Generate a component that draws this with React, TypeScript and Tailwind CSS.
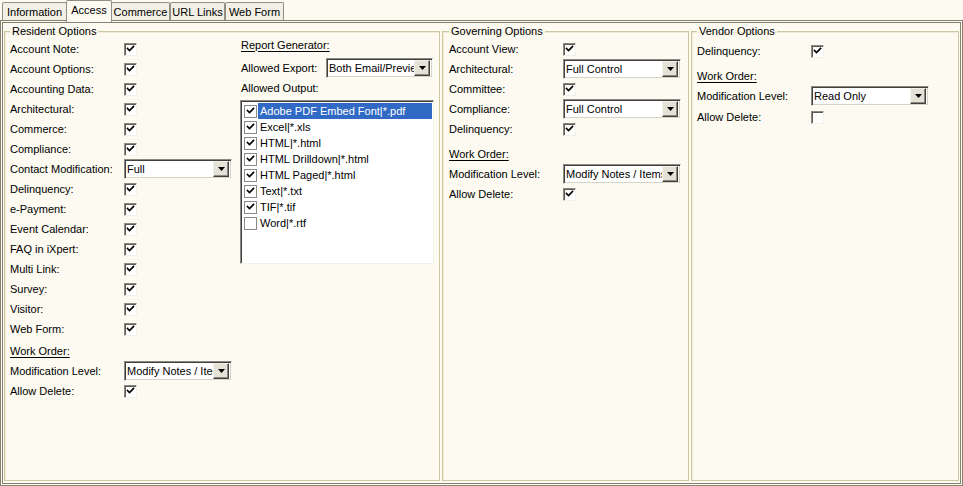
import React from "react";

const font = { fontFamily: '"Liberation Sans", Arial, sans-serif' };

function Tick() {
  return (
    <svg width="9" height="9" viewBox="0 0 9 9" className="block">
      <path d="M1.5 3.5 L3.5 5.5 L7.5 1.5" fill="none" stroke="#000" strokeWidth="1.7" strokeLinecap="square" />
    </svg>
  );
}

function Check({ checked = true }: { checked?: boolean }) {
  return (
    <span className="flex h-[13px] w-[13px] shrink-0 items-center justify-center border border-t-[#8c8a80] border-l-[#8c8a80] border-r-[#f4f2e8] border-b-[#f4f2e8] bg-white shadow-[inset_1px_1px_0_#5c5a52]">
      {checked && <Tick />}
    </span>
  );
}

function ListCheck({ checked = true }: { checked?: boolean }) {
  return (
    <span className="flex h-[13px] w-[13px] shrink-0 items-center justify-center border border-[#8a8a8a] bg-white">
      {checked && <Tick />}
    </span>
  );
}

function Select({ value, width }: { value: string; width: string }) {
  return (
    <div
      className={`flex h-[20px] shrink-0 items-center border border-t-[#8c8a80] border-l-[#8c8a80] border-r-[#fbfaf4] border-b-[#fbfaf4] bg-white shadow-[inset_1px_1px_0_#404040,inset_-1px_-1px_0_#d8d4c4] pl-[2px] pr-[2px] ${width}`}
    >
      <span className="min-w-0 flex-1 overflow-hidden whitespace-nowrap text-[11px] leading-[14px] text-black">{value}</span>
      <span className="flex h-[16px] w-[16px] shrink-0 items-center justify-center border border-t-[#f4f2ea] border-l-[#f4f2ea] border-r-[#404040] border-b-[#404040] bg-[#e4e1d6] shadow-[inset_-1px_-1px_0_#8c8a80]">
        <svg width="7" height="4" viewBox="0 0 7 4" className="block">
          <path d="M0 0 H7 L3.5 4 Z" fill="#000" />
        </svg>
      </span>
    </div>
  );
}

function Row({ label, children, className = "" }: { label: string; children?: React.ReactNode; className?: string }) {
  return (
    <div className={`flex h-[20px] items-center ${className}`}>
      <span className="w-[114px] shrink-0 text-[11px] leading-[13px] text-black">{label}</span>
      {children}
    </div>
  );
}

function Heading({ label, className = "" }: { label: string; className?: string }) {
  return (
    <div className={`flex h-[20px] items-center ${className}`}>
      <span className="text-[11px] leading-[13px] text-black underline underline-offset-2">{label}</span>
    </div>
  );
}

function Group({ title, width, children, pad }: { title: string; width: string; children: React.ReactNode; pad: string }) {
  return (
    <fieldset className={`h-[456px] shrink-0 border border-[#cfc79f] pt-[1px] shadow-[inset_1px_1px_0_#f1ecd6] ${pad} ${width}`}>
      <legend className="px-[2px] text-[11px] leading-[13px] text-black">{title}</legend>
      {children}
    </fieldset>
  );
}

const residentChecks = [
  "Account Note:",
  "Account Options:",
  "Accounting Data:",
  "Architectural:",
  "Commerce:",
  "Compliance:",
];

const residentChecks2 = [
  "Delinquency:",
  "e-Payment:",
  "Event Calendar:",
  "FAQ in iXpert:",
  "Multi Link:",
  "Survey:",
  "Visitor:",
  "Web Form:",
];

const outputs = [
  { name: "Adobe PDF Embed Font|*.pdf", checked: true },
  { name: "Excel|*.xls", checked: true },
  { name: "HTML|*.html", checked: true },
  { name: "HTML Drilldown|*.html", checked: true },
  { name: "HTML Paged|*.html", checked: true },
  { name: "Text|*.txt", checked: true },
  { name: "TIF|*.tif", checked: true },
  { name: "Word|*.rtf", checked: false },
];

const tabs = [
  { name: "Information", w: "w-[65px]" },
  { name: "Access", w: "w-[46px]" },
  { name: "Commerce", w: "w-[59px]" },
  { name: "URL Links", w: "w-[55px]" },
  { name: "Web Form", w: "w-[59px]" },
];

export default function App() {
  return (
    <div className="h-[486px] w-[963px] overflow-hidden bg-[#fcfaf1]" style={font}>
      <div className="flex h-[20px] items-end pl-[2px]">
        {tabs.map((t) =>
          t.name === "Access" ? (
            <div
              key={t.name}
              className={`relative z-10 -mb-[2px] -ml-[1px] -mr-[1px] flex h-[22px] items-start justify-center whitespace-nowrap rounded-t-[2px] border border-b-0 border-[#918f84] bg-[#fcfaf1] pt-[3px] text-[11px] leading-[13px] text-black ${t.w}`}
            >
              {t.name}
            </div>
          ) : (
            <div
              key={t.name}
              className={`flex h-[18px] items-start justify-center whitespace-nowrap rounded-t-[2px] border border-b-0 border-[#918f84] bg-[#f2f0e6] pt-[3px] text-[11px] leading-[13px] text-black ${t.w}`}
            >
              {t.name}
            </div>
          )
        )}
      </div>
      <div className="flex h-[466px] gap-[2px] border-[3px] border-double border-[#85826f] px-[1px] pt-[2px]">
        <Group title="Resident Options" width="w-[436px]" pad="pl-[5px]">
          <div className="flex">
            <div className="w-[230px] shrink-0">
              {residentChecks.map((l) => (
                <Row key={l} label={l}>
                  <Check />
                </Row>
              ))}
              <Row label="Contact Modification:">
                <Select value="Full" width="w-[108px]" />
              </Row>
              {residentChecks2.map((l) => (
                <Row key={l} label={l}>
                  <Check />
                </Row>
              ))}
              <Heading label="Work Order:" className="mt-[2px]" />
              <Row label="Modification Level:">
                <Select value="Modify Notes / Items" width="w-[108px]" />
              </Row>
              <Row label="Allow Delete:">
                <Check />
              </Row>
            </div>
            <div className="-mt-[1px] w-[194px] shrink-0">
              <div className="flex h-[14px] items-center pl-[1px]">
                <span className="text-[11px] leading-[13px] text-black underline underline-offset-2">Report Generator:</span>
              </div>
              <div className="mt-[6px] flex h-[20px] items-center pl-[1px]">
                <span className="w-[85px] shrink-0 text-[11px] leading-[13px] text-black">Allowed Export:</span>
                <Select value="Both Email/Preview" width="w-[107px]" />
              </div>
              <div className="flex h-[20px] items-center pl-[1px]">
                <span className="text-[11px] leading-[13px] text-black">Allowed Output:</span>
              </div>
              <div className="mt-[2px] h-[164px] w-[194px] border border-t-[#8c8a80] border-l-[#8c8a80] border-r-[#f4f2e8] border-b-[#f4f2e8] bg-white pt-[2px] shadow-[inset_1px_1px_0_#404040]">
                {outputs.map((o, i) => (
                  <div key={o.name} className="flex h-[16px] items-center pl-[3px] pr-[1px]">
                    <ListCheck checked={o.checked} />
                    <span
                      className={`ml-[1px] flex h-[16px] flex-1 items-center pl-[2px] text-[11px] leading-[13px] ${
                        i === 0 ? "bg-[#316ac5] text-white" : "text-black"
                      }`}
                    >
                      {o.name}
                    </span>
                  </div>
                ))}
              </div>
            </div>
          </div>
        </Group>
        <Group title="Governing Options" width="w-[247px]" pad="pl-[6px]">
          <Row label="Account View:">
            <Check />
          </Row>
          <Row label="Architectural:">
            <Select value="Full Control" width="w-[118px]" />
          </Row>
          <Row label="Committee:">
            <Check />
          </Row>
          <Row label="Compliance:">
            <Select value="Full Control" width="w-[118px]" />
          </Row>
          <Row label="Delinquency:">
            <Check />
          </Row>
          <Heading label="Work Order:" className="mt-[5px]" />
          <Row label="Modification Level:">
            <Select value="Modify Notes / Items" width="w-[118px]" />
          </Row>
          <Row label="Allow Delete:">
            <Check />
          </Row>
        </Group>
        <Group title="Vendor Options" width="w-[268px]" pad="pl-[5px]">
          <Row label="Delinquency:" className="mt-[2px]">
            <Check />
          </Row>
          <Heading label="Work Order:" className="mt-[5px]" />
          <Row label="Modification Level:">
            <Select value="Read Only" width="w-[118px]" />
          </Row>
          <Row label="Allow Delete:" className="mt-[1px]">
            <Check checked={false} />
          </Row>
        </Group>
      </div>
    </div>
  );
}
